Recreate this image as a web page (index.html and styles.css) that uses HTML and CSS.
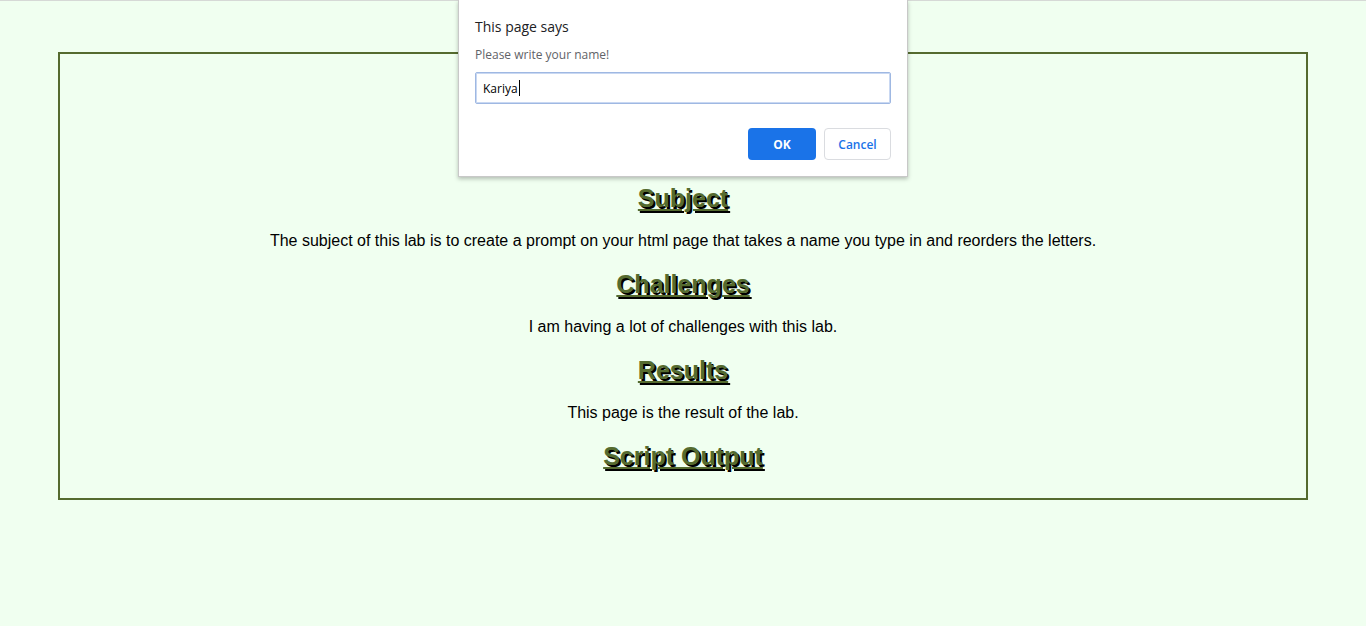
FILE: index.html
```html
<!DOCTYPE html>
<html>
<head>
<meta charset="utf-8">
<link rel="stylesheet" href="styles.css">
</head>
<body>
<div class="topline"></div>
<div class="box">
  <h2 class="heading">Subject</h2>
  <p class="text">The subject of this lab is to create a prompt on your html page that takes a name you type in and reorders the letters.</p>
  <h2 class="heading">Challenges</h2>
  <p class="text">I am having a lot of challenges with this lab.</p>
  <h2 class="heading">Results</h2>
  <p class="text">This page is the result of the lab.</p>
  <h2 class="heading">Script Output</h2>
</div>
<div class="dialog">
  <div class="dlg-title">This page says</div>
  <div class="dlg-msg">Please write your name!</div>
  <div class="dlg-input"><span>Kariya</span><span class="caret"></span></div>
  <div class="dlg-buttons">
    <button class="btn btn-ok">OK</button>
    <button class="btn btn-cancel">Cancel</button>
  </div>
</div>
</body>
</html>
```
FILE: styles.css
```css
html, body {
  margin: 0;
  padding: 0;
  background: #f0fff0;
  font-family: "Liberation Sans", Arial, sans-serif;
}
.topline {
  height: 1px;
  background: #d6d9d6;
}
.box {
  margin: 51px 58px 0 58px;
  border: 2px solid #556b2f;
  padding: 110px 0 8px 0;
  text-align: center;
}
.heading {
  font-size: 25px;
  font-weight: bold;
  color: #556b2f;
  text-decoration: underline;
  text-shadow: 2px 2px 0 #000;
  margin: 20px 0;
  line-height: 28px;
}
.text {
  font-size: 16px;
  color: #000;
  margin: 20px 0;
  line-height: 18px;
}
.dialog {
  position: absolute;
  left: 458px;
  top: 0;
  width: 416px;
  padding: 16px;
  background: #fff;
  border: 1px solid #c8c8c8;
  border-top: none;
  box-shadow: 0 2px 4px rgba(0,0,0,0.25);
  font-family: "Open Sans", "Noto Sans", sans-serif;
}
.dlg-title {
  font-size: 14px;
  color: #202124;
  line-height: 20px;
  margin-top: 1px;
}
.dlg-msg {
  font-size: 12px;
  color: #5f6368;
  margin-top: 9px;
  line-height: 18px;
}
.dlg-input {
  margin-top: 8px;
  height: 30px;
  border: 1px solid #9fb8e2;
  border-radius: 2px;
  box-shadow: 0 0 0 1px #c9d8f2 inset;
  display: flex;
  align-items: center;
  padding-left: 7px;
  font-size: 12px;
  color: #000;
}
.caret {
  display: inline-block;
  width: 1px;
  height: 16px;
  background: #000;
  margin-left: 1px;
}
.dlg-buttons {
  display: flex;
  justify-content: flex-end;
  gap: 8px;
  margin-top: 24px;
}
.btn {
  height: 32px;
  border-radius: 4px;
  font-family: "Open Sans", "Noto Sans", sans-serif;
  font-size: 12px;
  padding: 0;
  cursor: default;
}
.btn-ok {
  width: 68px;
  background: #1a73e8;
  color: #fff;
  border: none;
  font-weight: bold;
}
.btn-cancel {
  width: 67px;
  background: #fff;
  color: #1a73e8;
  border: 1px solid #dadce0;
  font-weight: 600;
}
```
